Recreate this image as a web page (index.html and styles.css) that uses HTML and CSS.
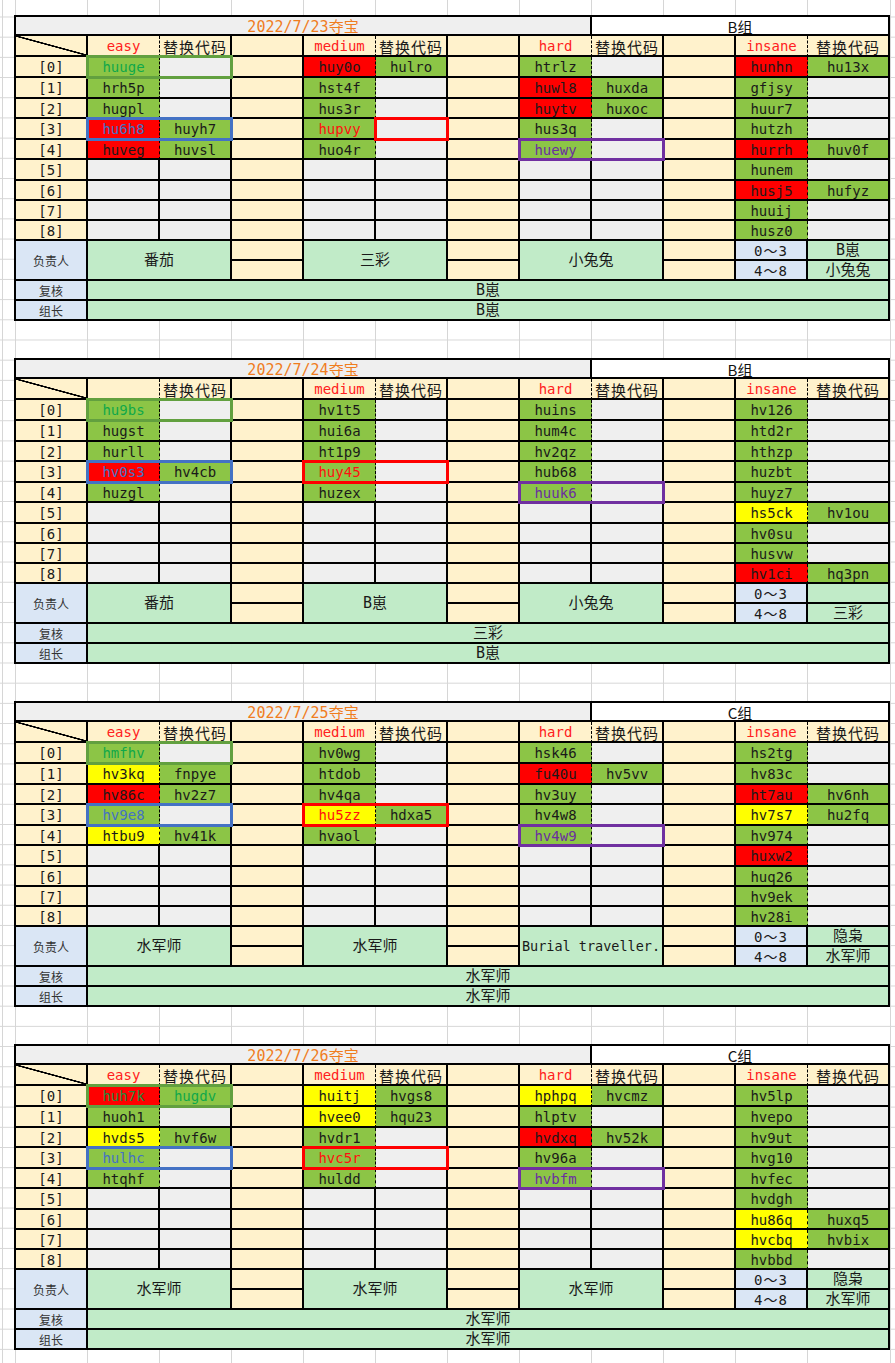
FILE: index.html
```html
<!DOCTYPE html>
<html lang="zh">
<head>
<meta charset="utf-8">
<title>夺宝</title>
<link rel="stylesheet" href="styles.css">
</head>
<body>

<!-- ===================== BLOCK 1 ===================== -->
<div class="sheet">
  <div class="c tg s8 ti">2022/7/23夺宝</div>
  <div class="c wt s4 gp">B组</div>

  <div class="c be dg"></div>
  <div class="c be ds hr">easy</div>
  <div class="c be hz">替换代码</div>
  <div class="c be"></div>
  <div class="c be ds hr">medium</div>
  <div class="c be hz">替换代码</div>
  <div class="c be"></div>
  <div class="c be ds hr">hard</div>
  <div class="c be hz">替换代码</div>
  <div class="c be"></div>
  <div class="c be ds hr">insane</div>
  <div class="c be hz">替换代码</div>

  <div class="c be">[0]</div>
  <div class="c gn ds tgn">huuge</div><div class="c gy"></div><div class="c be"></div>
  <div class="c rd ds">huy0o</div><div class="c gn">hulro</div><div class="c be"></div>
  <div class="c gn ds">htrlz</div><div class="c gy"></div><div class="c be"></div>
  <div class="c rd ds">hunhn</div><div class="c gn">hu13x</div>

  <div class="c be">[1]</div>
  <div class="c gn ds">hrh5p</div><div class="c gy"></div><div class="c be"></div>
  <div class="c gn ds">hst4f</div><div class="c gy"></div><div class="c be"></div>
  <div class="c rd ds">huwl8</div><div class="c gn">huxda</div><div class="c be"></div>
  <div class="c gn ds">gfjsy</div><div class="c gy"></div>

  <div class="c be">[2]</div>
  <div class="c gn ds">hugpl</div><div class="c gy"></div><div class="c be"></div>
  <div class="c gn ds">hus3r</div><div class="c gy"></div><div class="c be"></div>
  <div class="c rd ds">huytv</div><div class="c gn">huxoc</div><div class="c be"></div>
  <div class="c gn ds">huur7</div><div class="c gy"></div>

  <div class="c be">[3]</div>
  <div class="c rd ds tb">hu6h8</div><div class="c gn">huyh7</div><div class="c be"></div>
  <div class="c gn ds tr">hupvy</div><div class="c gy"></div><div class="c be"></div>
  <div class="c gn ds">hus3q</div><div class="c gy"></div><div class="c be"></div>
  <div class="c gn ds">hutzh</div><div class="c gy"></div>

  <div class="c be">[4]</div>
  <div class="c rd ds">huveg</div><div class="c gn">huvsl</div><div class="c be"></div>
  <div class="c gn ds">huo4r</div><div class="c gy"></div><div class="c be"></div>
  <div class="c gn ds tp">huewy</div><div class="c gy"></div><div class="c be"></div>
  <div class="c rd ds">hurrh</div><div class="c gn">huv0f</div>

  <div class="c be">[5]</div>
  <div class="c gy"></div><div class="c gy"></div><div class="c be"></div>
  <div class="c gy"></div><div class="c gy"></div><div class="c be"></div>
  <div class="c gy"></div><div class="c gy"></div><div class="c be"></div>
  <div class="c gn ds">hunem</div><div class="c gy"></div>

  <div class="c be">[6]</div>
  <div class="c gy"></div><div class="c gy"></div><div class="c be"></div>
  <div class="c gy"></div><div class="c gy"></div><div class="c be"></div>
  <div class="c gy"></div><div class="c gy"></div><div class="c be"></div>
  <div class="c rd ds">husj5</div><div class="c gn">hufyz</div>

  <div class="c be">[7]</div>
  <div class="c gy"></div><div class="c gy"></div><div class="c be"></div>
  <div class="c gy"></div><div class="c gy"></div><div class="c be"></div>
  <div class="c gy"></div><div class="c gy"></div><div class="c be"></div>
  <div class="c gn ds">huuij</div><div class="c gy"></div>

  <div class="c be">[8]</div>
  <div class="c gy"></div><div class="c gy"></div><div class="c be"></div>
  <div class="c gy"></div><div class="c gy"></div><div class="c be"></div>
  <div class="c gy"></div><div class="c gy"></div><div class="c be"></div>
  <div class="c gn ds">husz0</div><div class="c gy"></div>

  <div class="c lb r2 sm">负责人</div>
  <div class="c lg s2 r2 nm">番茄</div>
  <div class="c be"></div>
  <div class="c lg s2 r2 nm">三彩</div>
  <div class="c be"></div>
  <div class="c lg s2 r2 nm">小兔兔</div>
  <div class="c be"></div>
  <div class="c lb rg">0～3</div>
  <div class="c lg nm">B崽</div>
  <div class="c be"></div>
  <div class="c be"></div>
  <div class="c be"></div>
  <div class="c lb rg">4～8</div>
  <div class="c lg nm">小兔兔</div>

  <div class="c lb sm">复核</div>
  <div class="c lg s11 nm">B崽</div>
  <div class="c lb sm">组长</div>
  <div class="c lg s11 nm">B崽</div>

  <div class="bx bx-g"></div>
  <div class="bx bx-b"></div>
  <div class="bx bx-r1"></div>
  <div class="bx bx-p"></div>
</div>

<!-- ===================== BLOCK 2 ===================== -->
<div class="sheet">
  <div class="c tg s8 ti">2022/7/24夺宝</div>
  <div class="c wt s4 gp">B组</div>

  <div class="c be dg"></div>
  <div class="c be ds hr"></div>
  <div class="c be hz">替换代码</div>
  <div class="c be"></div>
  <div class="c be ds hr">medium</div>
  <div class="c be hz">替换代码</div>
  <div class="c be"></div>
  <div class="c be ds hr">hard</div>
  <div class="c be hz">替换代码</div>
  <div class="c be"></div>
  <div class="c be ds hr">insane</div>
  <div class="c be hz">替换代码</div>

  <div class="c be">[0]</div>
  <div class="c gn ds tgn">hu9bs</div><div class="c gy"></div><div class="c be"></div>
  <div class="c gn ds">hv1t5</div><div class="c gy"></div><div class="c be"></div>
  <div class="c gn ds">huins</div><div class="c gy"></div><div class="c be"></div>
  <div class="c gn ds">hv126</div><div class="c gy"></div>

  <div class="c be">[1]</div>
  <div class="c gn ds">hugst</div><div class="c gy"></div><div class="c be"></div>
  <div class="c gn ds">hui6a</div><div class="c gy"></div><div class="c be"></div>
  <div class="c gn ds">hum4c</div><div class="c gy"></div><div class="c be"></div>
  <div class="c gn ds">htd2r</div><div class="c gy"></div>

  <div class="c be">[2]</div>
  <div class="c gn ds">hurll</div><div class="c gy"></div><div class="c be"></div>
  <div class="c gn ds">ht1p9</div><div class="c gy"></div><div class="c be"></div>
  <div class="c gn ds">hv2qz</div><div class="c gy"></div><div class="c be"></div>
  <div class="c gn ds">hthzp</div><div class="c gy"></div>

  <div class="c be">[3]</div>
  <div class="c rd ds tb">hv0s3</div><div class="c gn">hv4cb</div><div class="c be"></div>
  <div class="c gn ds tr">huy45</div><div class="c gy"></div><div class="c be"></div>
  <div class="c gn ds">hub68</div><div class="c gy"></div><div class="c be"></div>
  <div class="c gn ds">huzbt</div><div class="c gy"></div>

  <div class="c be">[4]</div>
  <div class="c gn ds">huzgl</div><div class="c gy"></div><div class="c be"></div>
  <div class="c gn ds">huzex</div><div class="c gy"></div><div class="c be"></div>
  <div class="c gn ds tp">huuk6</div><div class="c gy"></div><div class="c be"></div>
  <div class="c gn ds">huyz7</div><div class="c gy"></div>

  <div class="c be">[5]</div>
  <div class="c gy"></div><div class="c gy"></div><div class="c be"></div>
  <div class="c gy"></div><div class="c gy"></div><div class="c be"></div>
  <div class="c gy"></div><div class="c gy"></div><div class="c be"></div>
  <div class="c yl ds">hs5ck</div><div class="c gn">hv1ou</div>

  <div class="c be">[6]</div>
  <div class="c gy"></div><div class="c gy"></div><div class="c be"></div>
  <div class="c gy"></div><div class="c gy"></div><div class="c be"></div>
  <div class="c gy"></div><div class="c gy"></div><div class="c be"></div>
  <div class="c gn ds">hv0su</div><div class="c gy"></div>

  <div class="c be">[7]</div>
  <div class="c gy"></div><div class="c gy"></div><div class="c be"></div>
  <div class="c gy"></div><div class="c gy"></div><div class="c be"></div>
  <div class="c gy"></div><div class="c gy"></div><div class="c be"></div>
  <div class="c gn ds">husvw</div><div class="c gy"></div>

  <div class="c be">[8]</div>
  <div class="c gy"></div><div class="c gy"></div><div class="c be"></div>
  <div class="c gy"></div><div class="c gy"></div><div class="c be"></div>
  <div class="c gy"></div><div class="c gy"></div><div class="c be"></div>
  <div class="c rd ds">hv1ci</div><div class="c gn">hq3pn</div>

  <div class="c lb r2 sm">负责人</div>
  <div class="c lg s2 r2 nm">番茄</div>
  <div class="c be"></div>
  <div class="c lg s2 r2 nm">B崽</div>
  <div class="c be"></div>
  <div class="c lg s2 r2 nm">小兔兔</div>
  <div class="c be"></div>
  <div class="c lb rg">0～3</div>
  <div class="c lg nm"></div>
  <div class="c be"></div>
  <div class="c be"></div>
  <div class="c be"></div>
  <div class="c lb rg">4～8</div>
  <div class="c lg nm">三彩</div>

  <div class="c lb sm">复核</div>
  <div class="c lg s11 nm">三彩</div>
  <div class="c lb sm">组长</div>
  <div class="c lg s11 nm">B崽</div>

  <div class="bx bx-g"></div>
  <div class="bx bx-b"></div>
  <div class="bx bx-r"></div>
  <div class="bx bx-p"></div>
</div>

<!-- ===================== BLOCK 3 ===================== -->
<div class="sheet">
  <div class="c tg s8 ti">2022/7/25夺宝</div>
  <div class="c wt s4 gp">C组</div>

  <div class="c be dg"></div>
  <div class="c be ds hr">easy</div>
  <div class="c be hz">替换代码</div>
  <div class="c be"></div>
  <div class="c be ds hr">medium</div>
  <div class="c be hz">替换代码</div>
  <div class="c be"></div>
  <div class="c be ds hr">hard</div>
  <div class="c be hz">替换代码</div>
  <div class="c be"></div>
  <div class="c be ds hr">insane</div>
  <div class="c be hz">替换代码</div>

  <div class="c be">[0]</div>
  <div class="c gn ds tgn">hmfhv</div><div class="c gy"></div><div class="c be"></div>
  <div class="c gn ds">hv0wg</div><div class="c gy"></div><div class="c be"></div>
  <div class="c gn ds">hsk46</div><div class="c gy"></div><div class="c be"></div>
  <div class="c gn ds">hs2tg</div><div class="c gy"></div>

  <div class="c be">[1]</div>
  <div class="c yl ds">hv3kq</div><div class="c gn">fnpye</div><div class="c be"></div>
  <div class="c gn ds">htdob</div><div class="c gy"></div><div class="c be"></div>
  <div class="c rd ds">fu40u</div><div class="c gn">hv5vv</div><div class="c be"></div>
  <div class="c gn ds">hv83c</div><div class="c gy"></div>

  <div class="c be">[2]</div>
  <div class="c rd ds">hv86c</div><div class="c gn">hv2z7</div><div class="c be"></div>
  <div class="c gn ds">hv4qa</div><div class="c gy"></div><div class="c be"></div>
  <div class="c gn ds">hv3uy</div><div class="c gy"></div><div class="c be"></div>
  <div class="c rd ds">ht7au</div><div class="c gn">hv6nh</div>

  <div class="c be">[3]</div>
  <div class="c gn ds tb">hv9e8</div><div class="c gy"></div><div class="c be"></div>
  <div class="c yl ds tr">hu5zz</div><div class="c gn">hdxa5</div><div class="c be"></div>
  <div class="c gn ds">hv4w8</div><div class="c gy"></div><div class="c be"></div>
  <div class="c yl ds">hv7s7</div><div class="c gn">hu2fq</div>

  <div class="c be">[4]</div>
  <div class="c yl ds">htbu9</div><div class="c gn">hv41k</div><div class="c be"></div>
  <div class="c gn ds">hvaol</div><div class="c gy"></div><div class="c be"></div>
  <div class="c gn ds tp">hv4w9</div><div class="c gy"></div><div class="c be"></div>
  <div class="c gn ds">hv974</div><div class="c gy"></div>

  <div class="c be">[5]</div>
  <div class="c gy"></div><div class="c gy"></div><div class="c be"></div>
  <div class="c gy"></div><div class="c gy"></div><div class="c be"></div>
  <div class="c gy"></div><div class="c gy"></div><div class="c be"></div>
  <div class="c rd ds">huxw2</div><div class="c gy"></div>

  <div class="c be">[6]</div>
  <div class="c gy"></div><div class="c gy"></div><div class="c be"></div>
  <div class="c gy"></div><div class="c gy"></div><div class="c be"></div>
  <div class="c gy"></div><div class="c gy"></div><div class="c be"></div>
  <div class="c gn ds">huq26</div><div class="c gy"></div>

  <div class="c be">[7]</div>
  <div class="c gy"></div><div class="c gy"></div><div class="c be"></div>
  <div class="c gy"></div><div class="c gy"></div><div class="c be"></div>
  <div class="c gy"></div><div class="c gy"></div><div class="c be"></div>
  <div class="c gn ds">hv9ek</div><div class="c gy"></div>

  <div class="c be">[8]</div>
  <div class="c gy"></div><div class="c gy"></div><div class="c be"></div>
  <div class="c gy"></div><div class="c gy"></div><div class="c be"></div>
  <div class="c gy"></div><div class="c gy"></div><div class="c be"></div>
  <div class="c gn ds">hv28i</div><div class="c gy"></div>

  <div class="c lb r2 sm">负责人</div>
  <div class="c lg s2 r2 nm">水军师</div>
  <div class="c be"></div>
  <div class="c lg s2 r2 nm">水军师</div>
  <div class="c be"></div>
  <div class="c lg s2 r2 bt">Burial traveller.</div>
  <div class="c be"></div>
  <div class="c lb rg">0～3</div>
  <div class="c lg nm">隐枭</div>
  <div class="c be"></div>
  <div class="c be"></div>
  <div class="c be"></div>
  <div class="c lb rg">4～8</div>
  <div class="c lg nm">水军师</div>

  <div class="c lb sm">复核</div>
  <div class="c lg s11 nm">水军师</div>
  <div class="c lb sm">组长</div>
  <div class="c lg s11 nm">水军师</div>

  <div class="bx bx-g"></div>
  <div class="bx bx-b"></div>
  <div class="bx bx-r"></div>
  <div class="bx bx-p"></div>
</div>

<!-- ===================== BLOCK 4 ===================== -->
<div class="sheet">
  <div class="c tg s8 ti">2022/7/26夺宝</div>
  <div class="c wt s4 gp">C组</div>

  <div class="c be dg"></div>
  <div class="c be ds hr">easy</div>
  <div class="c be hz">替换代码</div>
  <div class="c be"></div>
  <div class="c be ds hr">medium</div>
  <div class="c be hz">替换代码</div>
  <div class="c be"></div>
  <div class="c be ds hr">hard</div>
  <div class="c be hz">替换代码</div>
  <div class="c be"></div>
  <div class="c be ds hr">insane</div>
  <div class="c be hz">替换代码</div>

  <div class="c be">[0]</div>
  <div class="c rd ds tgd">huh7k</div><div class="c gn tgn">hugdv</div><div class="c be"></div>
  <div class="c yl ds">huitj</div><div class="c gn">hvgs8</div><div class="c be"></div>
  <div class="c yl ds">hphpq</div><div class="c gn">hvcmz</div><div class="c be"></div>
  <div class="c gn ds">hv5lp</div><div class="c gy"></div>

  <div class="c be">[1]</div>
  <div class="c gn ds">huoh1</div><div class="c gy"></div><div class="c be"></div>
  <div class="c yl ds">hvee0</div><div class="c gn">hqu23</div><div class="c be"></div>
  <div class="c gn ds">hlptv</div><div class="c gy"></div><div class="c be"></div>
  <div class="c gn ds">hvepo</div><div class="c gy"></div>

  <div class="c be">[2]</div>
  <div class="c yl ds">hvds5</div><div class="c gn">hvf6w</div><div class="c be"></div>
  <div class="c gn ds">hvdr1</div><div class="c gy"></div><div class="c be"></div>
  <div class="c rd ds">hvdxq</div><div class="c gn">hv52k</div><div class="c be"></div>
  <div class="c gn ds">hv9ut</div><div class="c gy"></div>

  <div class="c be">[3]</div>
  <div class="c gn ds tb">hulhc</div><div class="c gy"></div><div class="c be"></div>
  <div class="c gn ds tr">hvc5r</div><div class="c gy"></div><div class="c be"></div>
  <div class="c gn ds">hv96a</div><div class="c gy"></div><div class="c be"></div>
  <div class="c gn ds">hvg10</div><div class="c gy"></div>

  <div class="c be">[4]</div>
  <div class="c gn ds">htqhf</div><div class="c gy"></div><div class="c be"></div>
  <div class="c gn ds">huldd</div><div class="c gy"></div><div class="c be"></div>
  <div class="c gn ds tp">hvbfm</div><div class="c gy"></div><div class="c be"></div>
  <div class="c gn ds">hvfec</div><div class="c gy"></div>

  <div class="c be">[5]</div>
  <div class="c gy"></div><div class="c gy"></div><div class="c be"></div>
  <div class="c gy"></div><div class="c gy"></div><div class="c be"></div>
  <div class="c gy"></div><div class="c gy"></div><div class="c be"></div>
  <div class="c gn ds">hvdgh</div><div class="c gy"></div>

  <div class="c be">[6]</div>
  <div class="c gy"></div><div class="c gy"></div><div class="c be"></div>
  <div class="c gy"></div><div class="c gy"></div><div class="c be"></div>
  <div class="c gy"></div><div class="c gy"></div><div class="c be"></div>
  <div class="c yl ds">hu86q</div><div class="c gn">huxq5</div>

  <div class="c be">[7]</div>
  <div class="c gy"></div><div class="c gy"></div><div class="c be"></div>
  <div class="c gy"></div><div class="c gy"></div><div class="c be"></div>
  <div class="c gy"></div><div class="c gy"></div><div class="c be"></div>
  <div class="c yl ds">hvcbq</div><div class="c gn">hvbix</div>

  <div class="c be">[8]</div>
  <div class="c gy"></div><div class="c gy"></div><div class="c be"></div>
  <div class="c gy"></div><div class="c gy"></div><div class="c be"></div>
  <div class="c gy"></div><div class="c gy"></div><div class="c be"></div>
  <div class="c gn ds">hvbbd</div><div class="c gy"></div>

  <div class="c lb r2 sm">负责人</div>
  <div class="c lg s2 r2 nm">水军师</div>
  <div class="c be"></div>
  <div class="c lg s2 r2 nm">水军师</div>
  <div class="c be"></div>
  <div class="c lg s2 r2 nm">水军师</div>
  <div class="c be"></div>
  <div class="c lb rg">0～3</div>
  <div class="c lg nm">隐枭</div>
  <div class="c be"></div>
  <div class="c be"></div>
  <div class="c be"></div>
  <div class="c lb rg">4～8</div>
  <div class="c lg nm">水军师</div>

  <div class="c lb sm">复核</div>
  <div class="c lg s11 nm">水军师</div>
  <div class="c lb sm">组长</div>
  <div class="c lg s11 nm">水军师</div>

  <div class="bx bx-g"></div>
  <div class="bx bx-b"></div>
  <div class="bx bx-r"></div>
  <div class="bx bx-p"></div>
</div>

</body>
</html>
```

FILE: styles.css
```css
html {
  min-height: 100%;
  background-color: #ffffff;
  background-image:
    repeating-linear-gradient(to right, #d6d6d6 0 1px, transparent 1px 72px),
    linear-gradient(to right, transparent 890px, #d6d6d6 890px 891px, transparent 891px),
    linear-gradient(to right, transparent 2px, #d6d6d6 2px 3px, transparent 3px),
    linear-gradient(to bottom, #d6d6d6 0 1px, transparent 1px);
  background-size: 793px 100%, 100% 100%, 100% 100%, 100% 20.2px;
  background-position: 15px 0, 0 0, 0 0, 0 16.5px;
  background-repeat: no-repeat, no-repeat, no-repeat, repeat;
}

body {
  margin: 0;
  padding: 15px 0 0 14px;
  font-family: "DejaVu Sans Mono", "Noto Sans CJK SC", monospace;
  color: #1a1a1a;
}

.sheet {
  position: relative;
  display: grid;
  grid-template-columns: repeat(11, 72px) 82px;
  grid-template-rows: 19px 21px 21px 21px 20px 21px 20px 21px 20px 20px 20px 20px 20px 20px 20px;
  width: max-content;
  border-top: 2px solid #000;
  border-left: 2px solid #000;
}

.sheet + .sheet {
  margin-top: 37px;
}

.c {
  box-sizing: border-box;
  border-right: 2px solid #000;
  border-bottom: 2px solid #000;
  display: flex;
  align-items: center;
  justify-content: center;
  font-size: 14px;
  line-height: 1;
  white-space: nowrap;
  overflow: hidden;
  padding-top: 1px;
}

/* cell backgrounds */
.be { background-color: #fff2cc; }
.gy { background-color: #efefef; }
.gn { background-color: #8cc546; }
.rd { background-color: #ff0000; }
.yl { background-color: #ffff00; }
.lb { background-color: #dae6f5; }
.lg { background-color: #c1ebc8; }
.wt { background-color: #ffffff; }
.tg { background-color: #efefef; }

/* dashed separator between code and replacement columns */
.ds { border-right: 1px dashed #000; }

/* spans */
.s2 { grid-column: span 2; }
.s4 { grid-column: span 4; }
.s8 { grid-column: span 8; }
.s11 { grid-column: span 11; }
.r2 { grid-row: span 2; }

/* text styles */
.ti {
  color: #f07d1e;
  font-size: 15px;
  padding-top: 3px;
}
.gp {
  font-family: "Noto Sans CJK SC", sans-serif;
  font-size: 15px;
  color: #111;
  padding-top: 2px;
}
.hr { color: #ff2020; }
.hz {
  font-family: "Noto Sans CJK SC", sans-serif;
  font-size: 15px;
  letter-spacing: 1px;
  color: #1a1a1a;
  padding-top: 2px;
}
.tgn { color: #10a84a; }
.tgd { color: #1d8a3c; }
.tb { color: #4472c4; }
.tr { color: #ff1010; }
.tp { color: #6a2fa0; }

.sm {
  font-family: "Noto Sans CJK SC", sans-serif;
  font-size: 12px;
  color: #333;
}
.nm {
  font-size: 15px;
  color: #1a1a1a;
}
.rg {
  font-size: 14px;
  letter-spacing: 1px;
}
.bt {
  font-size: 13.5px;
  color: #1a1a1a;
}

/* diagonal header cell */
.dg {
  background-image: linear-gradient(to top right,
    transparent calc(50% - 1px),
    #000 calc(50% - 0.6px),
    #000 calc(50% + 0.6px),
    transparent calc(50% + 1px));
}

/* highlight frames drawn over cells */
.bx {
  position: absolute;
  top: -2px;
  left: -2px;
  right: -1px;
  bottom: -1px;
  border: 3px solid;
  pointer-events: none;
}
.bx-g { grid-area: 3 / 2 / 4 / 4; border-color: #62a03f; }
.bx-b { grid-area: 6 / 2 / 7 / 4; border-color: #4472c4; }
.bx-r1 { grid-area: 6 / 6 / 7 / 7; border-color: #ff0000; }
.bx-r { grid-area: 6 / 5 / 7 / 7; border-color: #ff0000; }
.bx-p { grid-area: 7 / 8 / 8 / 10; border-color: #7030a0; }
```
